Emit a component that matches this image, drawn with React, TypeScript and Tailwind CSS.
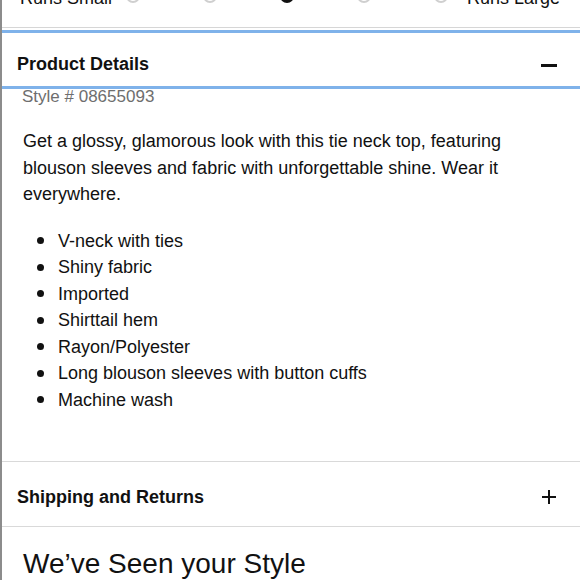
import React from "react";

const bullets = [
  "V-neck with ties",
  "Shiny fabric",
  "Imported",
  "Shirttail hem",
  "Rayon/Polyester",
  "Long blouson sleeves with button cuffs",
  "Machine wash",
];

function FitScale() {
  return (
    <div className="-mt-[14px] flex h-[24px] items-center pl-[18px] pr-[20px] text-[18px] leading-[24px] text-[#111]">
      <span>Runs Small</span>
      <div className="ml-[14px] flex items-center gap-[63px]">
        <span className="-mt-[4px] h-[14px] w-[14px] rounded-full border-2 border-[#cfcfcf]" />
        <span className="-mt-[4px] h-[14px] w-[14px] rounded-full border-2 border-[#cfcfcf]" />
        <span className="-mt-[4px] h-[14px] w-[14px] rounded-full bg-[#111]" />
        <span className="-mt-[4px] h-[14px] w-[14px] rounded-full border-2 border-[#cfcfcf]" />
        <span className="-mt-[4px] h-[14px] w-[14px] rounded-full border-2 border-[#cfcfcf]" />
      </div>
      <span className="ml-auto">Runs Large</span>
    </div>
  );
}

export default function App() {
  return (
    <div
      className="h-[580px] w-[580px] overflow-hidden border-l-2 border-[#8c8c8c] bg-white text-[#111]"
      style={{ fontFamily: '"Liberation Sans", Arial, sans-serif' }}
    >
      <FitScale />
      <div className="mt-[17px] h-px bg-[#d6d6d6]" />

      {/* Product Details (open) */}
      <div className="relative mt-[2px] border-y-[3px] border-[#7fb2ea]">
        <div className="flex h-[53px] items-start justify-between pl-[15px] pr-[23px] pt-[20px]">
          <div className="flex h-[22px] items-center text-[18px] font-bold leading-[22px]">Product Details</div>
          <div className="flex h-[22px] items-center pt-[2px]">
            <span className="h-[3px] w-[16px] bg-[#111]" />
          </div>
        </div>
      </div>

      <p className="-mt-[2px] pl-[20px] text-[17px] leading-[20px] text-[#6e6e6e]">Style # 08655093</p>

      <p className="mt-[21px] pl-[21px] pr-[40px] text-[18px] leading-[26.5px]">
        Get a glossy, glamorous look with this tie neck top, featuring blouson sleeves and fabric with unforgettable shine. Wear it everywhere.
      </p>

      <ul className="mt-[20px] pl-[35px] text-[18px] leading-[26.5px]">
        {bullets.map((b) => (
          <li key={b} className="flex items-center">
            <span className="h-[7px] w-[7px] shrink-0 rounded-full bg-[#111]" />
            <span className="ml-[14px]">{b}</span>
          </li>
        ))}
      </ul>

      {/* Shipping and Returns (closed) */}
      <div className="mt-[48px] border-y border-[#d9d9d9]">
        <div className="flex h-[64px] items-start justify-between pl-[15px] pr-[24px] pt-[24px]">
          <div className="flex h-[22px] items-center text-[18px] font-bold leading-[22px]">Shipping and Returns</div>
          <div className="relative flex h-[22px] w-[14px] items-center justify-center">
            <span className="h-[2px] w-[14px] bg-[#111]" />
            <span className="absolute left-[6px] top-[4px] h-[14px] w-[2px] bg-[#111]" />
          </div>
        </div>
      </div>

      <h2 className="mt-[20px] pl-[21px] text-[28px] font-normal leading-[34px]">We’ve Seen your Style</h2>
    </div>
  );
}
